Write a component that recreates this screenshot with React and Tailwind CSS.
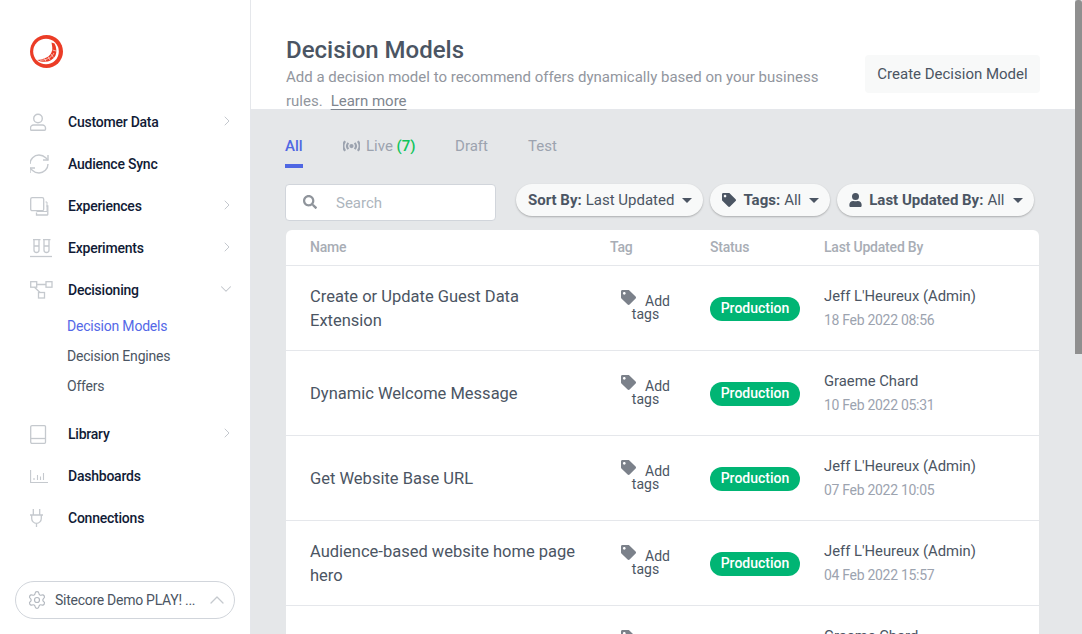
import { ChevronRight, ChevronDown, ChevronUp, Settings } from 'lucide-react';

const Logo = () => (
  <svg width="33" height="33" viewBox="0 0 33 33">
    <circle cx="16.5" cy="16.5" r="16.500" fill="#eb3c26" />
    <circle cx="16" cy="16.500" r="12.800" fill="#fff" />
    <path d="M7 25 C14 28.500 22 27 25.500 20.500 C27 17 26.500 12 24.500 8.500 L21.500 7.500 L22 10.500 C23 15 21.500 19.500 17.500 22 C14 24 10 24.800 7 25 Z" fill="#eb3c26" />
    <path d="M10 25.200 C15 25.500 21 23.500 24 18 M14.500 23.500 L16 26.500 M18 21.500 L20 25 M21 19 L23.500 22.500 M22.500 15 L26 16" stroke="#fff" strokeWidth="0.6" fill="none" />
  </svg>
);

const iconCls = 'w-[24px] h-[24px] text-[#c5c9ce]';

// all icons sit in a 24px box, left aligned with the 30px sidebar inset
const PersonIcon = () => (
  <svg viewBox="0 0 24 24" className={iconCls} fill="none" stroke="currentColor" strokeWidth="1.4">
    <circle cx="8" cy="8.500" r="4.300" />
    <path d="M3.500 15h9a3 3 0 0 1 3 3v1.300a1 1 0 0 1-1 1h-13a1 1 0 0 1-1-1V18a3 3 0 0 1 3-3z" />
  </svg>
);

const SyncIcon = () => (
  <svg viewBox="0 0 24 24" className={iconCls} fill="none" stroke="currentColor" strokeWidth="1.4">
    <g transform="translate(-3 0)">
      <path d="M3 12a9 9 0 0 1 9-9 9.750 9.750 0 0 1 6.740 2.740L21 8" />
      <path d="M21 3v5h-5" />
      <path d="M21 12a9 9 0 0 1-9 9 9.750 9.750 0 0 1-6.740-2.740L3 16" />
      <path d="M8 16H3v5" />
    </g>
  </svg>
);

const ExperiencesIcon = () => (
  <svg viewBox="0 0 24 24" className={iconCls} fill="none" stroke="currentColor" strokeWidth="1.3">
    <rect x="0.700" y="3.700" width="13" height="13" rx="1.500" />
    <path d="M15.500 8H17v9.500H6.500" strokeWidth="1" />
    <path d="M16.500 12h1.300v8.500a.5.5 0 0 1-.5.5H6.500v-2.500" />
  </svg>
);

const ExperimentsIcon = () => (
  <svg viewBox="0 0 24 24" className={iconCls} fill="none" stroke="currentColor" strokeWidth="1.3">
    <path d="M3 3.700h7.500M13 3.700h7.500M4 3.700V14a2.500 2.500 0 0 0 5 0V3.700M14 3.700V14a2.500 2.500 0 0 0 5 0V3.700M4 10h5M14 10h5" />
    <path d="M0 20.500h22" />
  </svg>
);

const DecisioningIcon = () => (
  <svg viewBox="0 0 24 24" className={iconCls} fill="none" stroke="currentColor" strokeWidth="1.3">
    <rect x="0.700" y="3.700" width="6" height="5.500" />
    <rect x="16" y="3.700" width="6" height="5.500" />
    <rect x="8.500" y="14.500" width="6" height="5.500" />
    <path d="M6.700 6.500H16M4.500 9.200l5.500 5.300" />
  </svg>
);

const LibraryIcon = () => (
  <svg viewBox="0 0 24 24" className={iconCls} fill="none" stroke="currentColor" strokeWidth="1.3">
    <path d="M2 3.700h12.500a1 1 0 0 1 1 1v15.600a1 1 0 0 1-1 1H2a1.300 1.300 0 0 1-1.300-1.300V5a1.300 1.300 0 0 1 1.300-1.300z" />
    <path d="M.7 16.500h14.800" />
  </svg>
);

const DashboardsIcon = () => (
  <svg viewBox="0 0 24 24" className={iconCls} fill="none" stroke="currentColor" strokeWidth="1.100">
    <path d="M.6 6v12.500H18" />
    <path d="M4 16v-2M7.500 16v-5M10.500 16v-3.500M13.500 16V9" />
  </svg>
);

const ConnectionsIcon = () => (
  <svg viewBox="0 0 24 24" className={iconCls} fill="none" stroke="currentColor" strokeWidth="1.300">
    <path d="M0 9h13M1.700 9v3.500a4.800 4.800 0 0 0 9.600 0V9M3.300 3v6M9.700 3v6M6.500 17.300V21" />
  </svg>
);

const TagIcon = ({ className }) => (
  <svg viewBox="0 0 512 512" className={className} fill="currentColor">
    <path d="M0 252V48C0 21.500 21.500 0 48 0h204c12.700 0 25 5 34 14l212 212c18.700 18.700 18.700 49.100 0 67.900L294 498c-18.700 18.700-49.100 18.700-67.900 0L14 286c-9-9-14-21.300-14-34zm112-188c-26.500 0-48 21.500-48 48s21.500 48 48 48 48-21.500 48-48-21.500-48-48-48z" />
  </svg>
);

const Caret = () => (
  <span className="w-0 h-0 border-x-[5px] border-x-transparent border-t-[5px] border-t-[#4b5563] ml-2 mt-px" />
);

const NavItem = ({ icon, label, chevron }) => (
  <div className="h-[42px] flex items-center pl-[30px] pr-[15px]">
    <div className="w-[38px] shrink-0 flex items-center">{icon}</div>
    <span className="flex-1 text-[14px] tracking-[-0.23px] font-medium text-[#111b36]">{label}</span>
    {chevron === 'right' && <ChevronRight className="w-[16px] h-[16px] -mt-[2px] text-[#c0c4ca]" strokeWidth={1.4} />}
    {chevron === 'down' && <ChevronDown className="w-[18px] h-[18px] -mt-[2px] text-[#c0c4ca]" strokeWidth={1.4} />}
  </div>
);

const SubItem = ({ label, active }) => (
  <div className={`h-[30px] flex items-center pl-[67px] text-[14px] tracking-[-0.2px] ${active ? 'text-[#5468e7]' : 'text-[#4b5563]'}`}>{label}</div>
);

const Sidebar = () => (
  <aside className="w-[251px] shrink-0 h-full bg-white border-r border-[#e5e7eb] flex flex-col">
    <div className="pl-[30px] pt-[35px] h-[101px]">
      <Logo />
    </div>
    <nav>
      <NavItem icon={<PersonIcon />} label="Customer Data" chevron="right" />
      <NavItem icon={<SyncIcon />} label="Audience Sync" />
      <NavItem icon={<ExperiencesIcon />} label="Experiences" chevron="right" />
      <NavItem icon={<ExperimentsIcon />} label="Experiments" chevron="right" />
      <NavItem icon={<DecisioningIcon />} label="Decisioning" chevron="down" />
      <div className="pb-[12px]">
        <SubItem label="Decision Models" active />
        <SubItem label="Decision Engines" />
        <SubItem label="Offers" />
      </div>
      <NavItem icon={<LibraryIcon />} label="Library" chevron="right" />
      <NavItem icon={<DashboardsIcon />} label="Dashboards" />
      <NavItem icon={<ConnectionsIcon />} label="Connections" />
    </nav>
    <div className="mt-auto mb-[15px] mx-[15px] h-[38px] rounded-full border border-[#d1d5db] flex items-center pl-[11px] pr-[5px]">
      <Settings className="w-[20px] h-[20px] text-[#b4b9c0] shrink-0" strokeWidth={1.4} />
      <span className="ml-[8px] flex-1 text-[14px] tracking-[-0.27px] text-[#4b5563] whitespace-nowrap">Sitecore Demo PLAY! ...</span>
      <ChevronUp className="w-[24px] h-[24px] text-[#c5c9ce] shrink-0" strokeWidth={1.3} />
    </div>
  </aside>
);

const Header = () => (
  <header className="h-[110px] shrink-0 bg-white border-b border-[#e5e7eb] flex items-start pl-[35px] pr-[35px]">
    <div className="flex-1 pt-[35px]">
      <h1 className="text-[24px] leading-[30px] font-medium text-[#4b5563]">Decision Models</h1>
      <p className="w-[560px] text-[15px] leading-[24px] text-[#92969e]">
        Add a decision model to recommend offers dynamically based on your business rules.
        <span className="ml-[8px] text-[#80868f] underline underline-offset-[3px]">Learn more</span>
      </p>
    </div>
    <button className="mt-[55px] h-[38px] w-[175px] rounded bg-[#f8f9f9] text-[15px] text-[#4b5563]">Create Decision Model</button>
  </header>
);

const Tabs = () => (
  <div className="flex h-[58px] pt-[26px] text-[15px] text-[#9ca3af] ml-[34px]">
    <div className="w-[18px] h-[28px] border-b-[4px] border-[#4f67e3] text-[#4f67e3] font-medium leading-[20px] box-content">All</div>
    <div className="ml-[40px] flex items-start leading-[20px]">
      <svg viewBox="0 0 24 16" className="w-[17px] h-[12px] mt-[4px] mr-[6px] text-[#9ca3af]" fill="none" stroke="currentColor" strokeWidth="3">
        <circle cx="12" cy="8" r="3" fill="currentColor" stroke="none" />
        <path d="M7.500 3.500a7 7 0 0 0 0 9M16.500 3.500a7 7 0 0 1 0 9M3 1a12 12 0 0 0 0 14M21 1a12 12 0 0 1 0 14" />
      </svg>
      <span>Live <span className="text-[#0fc45a] font-medium">(7)</span></span>
    </div>
    <div className="ml-[39.5px] leading-[20px]">Draft</div>
    <div className="ml-[40px] leading-[20px]">Test</div>
  </div>
);

const Pill = ({ children }) => (
  <div className="h-[32px] rounded-full bg-[#f8f9f9] shadow-[0_1px_2px_rgba(0,0,0,0.25)] flex items-center pl-[12px] pr-[11px] text-[15px] text-[#4b5563] whitespace-nowrap">
    {children}
    <Caret />
  </div>
);

const Filters = () => (
  <div className="flex items-start mt-[16px] ml-[34px] mr-[42px] h-[46px]">
    <div className="w-[211px] shrink-0 h-[37px] rounded border border-[#d1d5db] bg-white flex items-center pl-[17px]">
      <svg viewBox="0 0 512 512" className="w-[14px] h-[14px] -mt-[2px] text-[#8f949b]" fill="currentColor">
        <path d="M505 442.700L405.300 343c-4.500-4.500-10.600-7-17-7H372c27.600-35.300 44-79.700 44-128C416 93.100 322.900 0 208 0S0 93.100 0 208s93.100 208 208 208c48.300 0 92.700-16.400 128-44v16.300c0 6.400 2.500 12.500 7 17l99.700 99.700c9.400 9.400 24.600 9.400 33.900 0l28.300-28.300c9.400-9.400 9.400-24.600.1-34zM208 336c-70.700 0-128-57.200-128-128 0-70.700 57.200-128 128-128 70.700 0 128 57.200 128 128 0 70.700-57.200 128-128 128z" />
      </svg>
      <span className="ml-[19px] mt-[1px] text-[15px] text-[#adb5bd]">Search</span>
    </div>
    <div className="flex gap-[7px] ml-[20px]">
      <Pill><span className="font-bold mr-1">Sort By:</span>Last Updated</Pill>
      <Pill>
        <TagIcon className="w-[14px] h-[14px] mr-[7px]" />
        <span className="font-bold mr-1">Tags:</span>All
      </Pill>
      <Pill>
        <svg viewBox="0 0 448 512" className="w-[13px] h-[14px] mr-[7px]" fill="currentColor">
          <path d="M224 256a128 128 0 1 0 0-256 128 128 0 0 0 0 256zm90 32h-17a174 174 0 0 1-146 0h-17C60 288 0 348 0 422v42c0 26 22 48 48 48h352c26 0 48-22 48-48v-42c0-74-60-134-134-134z" />
        </svg>
        <span className="font-bold mr-1">Last Updated By:</span>All
      </Pill>
    </div>
  </div>
);

const rows = [
  { name: 'Create or Update Guest Data Extension', user: "Jeff L'Heureux (Admin)", date: '18 Feb 2022 08:56' },
  { name: 'Dynamic Welcome Message', user: 'Graeme Chard', date: '10 Feb 2022 05:31' },
  { name: 'Get Website Base URL', user: "Jeff L'Heureux (Admin)", date: '07 Feb 2022 10:05' },
  { name: 'Audience-based website home page hero', user: "Jeff L'Heureux (Admin)", date: '04 Feb 2022 15:57' },
  { name: 'Offer Recommendations', user: 'Graeme Chard', date: '01 Feb 2022 11:20' },
];

const Row = ({ row }) => (
  <div className="h-[85px] shrink-0 border-t border-[#e5e7eb] flex items-center pl-[24px]">
    <div className="w-[300px] pr-[30px] pt-[2px] text-[16.5px] leading-[24px] text-[#4b5563]">{row.name}</div>
    <div className="w-[100px] pl-[10px] pr-[39px] pb-[6px] text-[14px] leading-[13px] text-[#4b5563] text-center">
      <TagIcon className="inline-block w-[15px] h-[15px] mr-[9px] text-[#7b818a] align-[1px]" />
      Add tags
    </div>
    <div className="w-[114px]">
      <span className="inline-block w-[90px] h-[24px] rounded-full bg-[#00b574] text-center text-[14px] leading-[22px] font-medium text-white">Production</span>
    </div>
    <div>
      <div className="text-[14.8px] leading-[20px] text-[#4b5563]">{row.user}</div>
      <div className="mt-[4px] text-[14px] tracking-[-0.3px] leading-[20px] text-[#9ca3af]">{row.date}</div>
    </div>
  </div>
);

const Table = () => (
  <div className="ml-[35px] mr-[36px] flex-1 bg-white rounded-t-[6px] overflow-hidden flex flex-col">
    <div className="h-[35px] shrink-0 flex items-center pl-[24px] text-[14px] tracking-[-0.2px] font-medium text-[#a8adb5]">
      <div className="w-[300px]">Name</div>
      <div className="w-[100px]">Tag</div>
      <div className="w-[114px]">Status</div>
      <div>Last Updated By</div>
    </div>
    {rows.map((row) => <Row key={row.date} row={row} />)}
  </div>
);

export default function App() {
  return (
    <div className="h-screen flex overflow-hidden bg-[#e5e7e9] font-['Roboto',sans-serif]">
      <Sidebar />
      <main className="flex-1 min-w-0 h-full flex flex-col overflow-hidden">
        <Header />
        <Tabs />
        <Filters />
        <Table />
      </main>
      <div className="w-[7px] shrink-0">
        <div className="h-[354px] bg-[#8f8f8f] rounded-t-[3px]" />
      </div>
    </div>
  );
}
